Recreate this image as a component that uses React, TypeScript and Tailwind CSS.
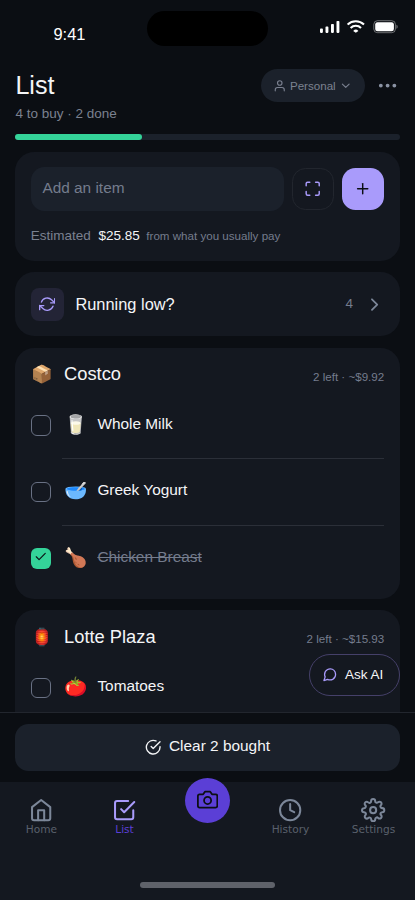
import type { ReactNode } from 'react';
import {
  FiCamera,
  FiCheck,
  FiCheckCircle,
  FiCheckSquare,
  FiChevronDown,
  FiChevronRight,
  FiClock,
  FiHome,
  FiMaximize,
  FiMessageCircle,
  FiMoreHorizontal,
  FiPlus,
  FiRefreshCw,
  FiSettings,
  FiUser,
} from 'react-icons/fi';

type Item = { name: string; emoji: string; done?: boolean };
type Store = { name: string; emoji: string; meta: string; items: Item[] };

const stores: Store[] = [
  {
    name: 'Costco',
    emoji: '📦',
    meta: '2 left · ~$9.92',
    items: [
      { name: 'Whole Milk', emoji: '🥛' },
      { name: 'Greek Yogurt', emoji: '🥣' },
      { name: 'Chicken Breast', emoji: '🍗', done: true },
    ],
  },
  {
    name: 'Lotte Plaza',
    emoji: '🏮',
    meta: '2 left · ~$15.93',
    items: [{ name: 'Tomatoes', emoji: '🍅' }],
  },
];

function StatusBar() {
  return (
    <div className="relative h-[69px] shrink-0">
      <span className="absolute left-[53.5px] top-[24px] text-[16.4px] leading-[20px] text-white">9:41</span>
      <div className="absolute left-[147px] top-[10.6px] h-[35.4px] w-[121px] rounded-full bg-black" />
      <div className="absolute left-[320px] top-[20px] flex items-start">
        <svg width="20" height="13" viewBox="0 0 20 13" fill="#fff">
          <rect x="0" y="8.6" width="2.9" height="4.3" rx="0.8" />
          <rect x="5.5" y="6.6" width="2.9" height="6.3" rx="0.8" />
          <rect x="11" y="4" width="2.9" height="8.9" rx="0.8" />
          <rect x="16.5" y="1" width="2.9" height="11.9" rx="0.8" />
        </svg>
        <svg className="ml-[7px]" width="18" height="13" viewBox="0 0 18 13" fill="none" stroke="#fff" strokeWidth="2.1">
          <path d="M0.6 4.6a11.8 11.8 0 0 1 16.4 0" />
          <path d="M3.6 7.9a7.4 7.4 0 0 1 10.4 0" />
          <path d="M6.2 10.9a3.7 3.7 0 0 1 5.2 0L8.8 12.8z" fill="#fff" stroke="none" />
        </svg>
        <svg className="ml-[8px]" width="26" height="14" viewBox="0 0 26 14" fill="none">
          <rect x="0.8" y="0.7" width="21.6" height="12" rx="3.7" stroke="#fff" strokeOpacity="0.4" />
          <rect x="2.2" y="2.2" width="18.7" height="9" rx="2.3" fill="#fff" />
          <path d="M23.4 4.8v4c.8-.3 1.3-1.1 1.3-2s-.5-1.7-1.3-2z" fill="#fff" fillOpacity="0.4" />
        </svg>
      </div>
    </div>
  );
}

function Card({ className, children }: { className: string; children: ReactNode }) {
  return <section className={`shrink-0 rounded-[19.3px] bg-[#141820] px-[15.4px] ${className}`}>{children}</section>;
}

function StoreCard({ store }: { store: Store }) {
  return (
    <Card className="h-[251px] pt-[15.4px]">
      <div className="flex h-[21.6px] items-center">
        <span className="w-[33.3px] pl-[0.6px] text-[17.4px] leading-[22px]">{store.emoji}</span>
        <h2 className="text-[18.3px] leading-[22px] text-[#f4f5f7]">{store.name}</h2>
        <span className="ml-auto pt-[5.4px] text-[11.6px] leading-[14px] text-[#747c8d]">{store.meta}</span>
      </div>
      {store.items.map((item, i) => (
        <div key={item.name} className="flex h-[66.6px]">
          <div className="flex w-[31.6px] shrink-0 pt-[30.4px]">
            {item.done ? (
              <span className="flex size-[20.4px] items-center justify-center rounded-[6px] bg-[#34d399] pb-[3px] text-[#0b0e13]">
                <FiCheck size={13.5} />
              </span>
            ) : (
              <span className="size-[20.4px] rounded-[6px] border-[1.5px] border-[#697184]" />
            )}
          </div>
          <div className={`flex flex-1 items-start pt-[26px] ${i > 0 ? 'shadow-[inset_0_7px_0_#141820,inset_0_8px_0_#2b2f38]' : ''}`}>
            <span className="w-[35px] pl-[1.9px] pt-[2px] text-[18.8px] leading-[23px]">{item.emoji}</span>
            <span className={`pt-[3px] text-[15.4px] leading-[19px] ${item.done ? 'text-[#747c8d] line-through' : 'text-[#f4f5f7]'}`}>
              {item.name}
            </span>
          </div>
        </div>
      ))}
    </Card>
  );
}

const tabs = [
  { label: 'Home', icon: FiHome },
  { label: 'List', icon: FiCheckSquare, active: true },
  { label: '', icon: FiCamera },
  { label: 'History', icon: FiClock },
  { label: 'Settings', icon: FiSettings },
];

function TabBar() {
  return (
    <nav className="relative grid h-[118px] shrink-0 grid-cols-5 bg-[#141820] font-['DejaVu_Sans',sans-serif]">
      {tabs.map(({ label, icon: Icon, active }) =>
        label ? (
          <button key={label} className="flex flex-col items-center justify-start pt-[15.8px]">
            <Icon size={24.3} className={active ? 'text-[#a99bfb]' : 'text-[#7c8799]'} />
            <span className={`mt-[0.9px] text-[10.6px] leading-[12.5px] ${active ? 'text-[#5b3fd6]' : 'text-[#5a606c]'}`}>{label}</span>
          </button>
        ) : (
          <button key="scan" className="-mt-[4.5px] flex size-[45px] items-center justify-center justify-self-center rounded-full bg-[#5b3fd6] text-[#0b0e13]">
            <Icon size={21.2} />
          </button>
        )
      )}
      <div className="absolute left-[140px] top-[100px] h-[5.5px] w-[135px] rounded-full bg-[#5f626a]" />
    </nav>
  );
}

export default function App() {
  return (
    <div className="flex h-[900px] w-[415px] flex-col overflow-hidden bg-[#0b0e13] font-['Liberation_Sans',sans-serif]">
      <StatusBar />

      <header className="shrink-0 px-[15.4px]">
        <div className="flex h-[33.5px] items-center">
          <h1 className="pb-[2px] text-[25.1px] leading-[30px] text-[#f4f5f7]">List</h1>
          <button className="ml-auto flex h-[33px] w-[104px] items-center rounded-full bg-[#1b212b] pl-[12.5px] text-[#7b8190]">
            <FiUser size={13.5} />
            <span className="ml-[3px] text-[11.6px]">Personal</span>
            <FiChevronDown size={13.5} className="ml-[3.5px]" />
          </button>
          <FiMoreHorizontal size={23.2} className="ml-[11.5px] text-[#8a92a3]" />
        </div>
        <p className="mt-[3px] text-[13.5px] leading-[16px] text-[#7b8190]">4 to buy · 2 done</p>
        <div className="mt-[12.5px] h-[6px] rounded-full bg-[#1b212b]">
          <div className="h-full w-[126.5px] rounded-full bg-[#34d399]" />
        </div>
      </header>

      <main className="relative flex min-h-0 flex-1 flex-col gap-[11.6px] overflow-hidden px-[15.4px] pt-[11.6px]">
        <Card className="h-[109.2px] pt-[15.4px]">
          <div className="flex items-center gap-[7.6px]">
            <div className="flex h-[44.4px] flex-1 items-center rounded-[13.5px] bg-[#1b212b] px-[11.6px] pb-[3px] text-[15.4px] text-[#747c8d]">
              Add an item
            </div>
            <button className="flex size-[42.5px] items-center justify-center rounded-[13.5px] border border-[#22262e] text-[#a99bfb]">
              <FiMaximize size={17.4} />
            </button>
            <button className="flex size-[42.5px] items-center justify-center rounded-[13.5px] bg-[#a99bfb] text-[#0b0e13]">
              <FiPlus size={17.4} />
            </button>
          </div>
          <div className="mt-[17px] flex items-baseline text-[13.5px] leading-[16px]">
            <span className="text-[#7b8190]">Estimated</span>
            <span className="ml-[7.6px] text-[#f4f5f7]">$25.85</span>
            <span className="ml-[6.6px] text-[11.6px] text-[#747c8d]">from what you usually pay</span>
          </div>
        </Card>

        <Card className="flex h-[63.8px] items-center">
          <span className="flex size-[33px] items-center justify-center rounded-[8px] bg-[#232436] text-[#a99bfb]">
            <FiRefreshCw size={16.4} />
          </span>
          <span className="ml-[11.6px] text-[16.4px] text-[#f4f5f7]">Running low?</span>
          <span className="ml-auto text-[13.5px] text-[#747c8d]">4</span>
          <FiChevronRight size={21.2} className="-mr-[1px] ml-[11px] text-[#7c8799]" />
        </Card>

        {stores.map((store) => (
          <StoreCard key={store.name} store={store} />
        ))}

        <button className="absolute bottom-[16px] right-[15.4px] flex h-[42.5px] w-[90.5px] items-center rounded-full border border-[#454069] bg-[#141820] pl-[12px] text-[13.5px] text-[#f4f5f7]">
          <FiMessageCircle size={15.5} className="text-[#a99bfb]" />
          <span className="ml-[7.5px]">Ask AI</span>
        </button>
      </main>

      <div className="h-[70px] shrink-0 border-t border-[#22262e] px-[15.4px] pt-[11.3px]">
        <button className="flex h-[46.4px] w-full items-center justify-center gap-[7.6px] rounded-[13.5px] bg-[#1b212b] text-[15.4px] text-[#f4f5f7]">
          <FiCheckCircle size={16.4} />
          <span className="pb-[3px]">Clear 2 bought</span>
        </button>
      </div>

      <TabBar />
    </div>
  );
}
